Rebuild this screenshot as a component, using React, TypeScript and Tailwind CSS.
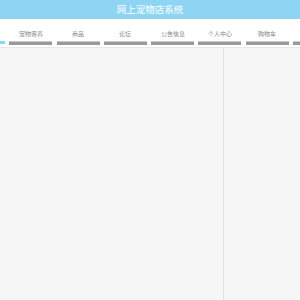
const items = ['宠物寄养', '商品', '论坛', '公告信息', '个人中心', '购物车', ''];

export default function App() {
  return (
    <div className="w-[300px] h-[300px] overflow-hidden bg-white font-['Noto_Sans_CJK_SC',sans-serif] flex flex-col">
      {/* header */}
      <div className="h-[19px] shrink-0 bg-[#8ed5f3] flex items-center justify-center">
        <span className="text-[9.5px] leading-none text-white">网上宠物店系统</span>
      </div>

      {/* nav */}
      <div className="h-[28px] shrink-0 flex items-end pb-[2px] gap-[4.3px] overflow-hidden">
        <div className="w-[5px] shrink-0 flex flex-col mb-[1px]">
          <div className="h-[3px] bg-[#8ed5f3]" />
        </div>
        {items.map((t, i) => (
          <div key={i} className="w-[43px] shrink-0 flex flex-col items-center">
            <div className="h-[6px] mb-[5px] flex items-center justify-center">
              <span className="text-[12px] leading-none text-[#888] whitespace-nowrap scale-50 opacity-[0.99]">{t}</span>
            </div>
            <div className="w-full h-[4px] bg-[#9a9a9a] border-t border-[#c8c8c8]" />
          </div>
        ))}
      </div>

      {/* body */}
      <div className="flex-1 flex border-t border-[#e8e8e8] bg-[#f6f6f6]">
        <div className="w-[224px] shrink-0 border-r border-[#e2e2e2]" />
        <div className="flex-1" />
      </div>
    </div>
  );
}
